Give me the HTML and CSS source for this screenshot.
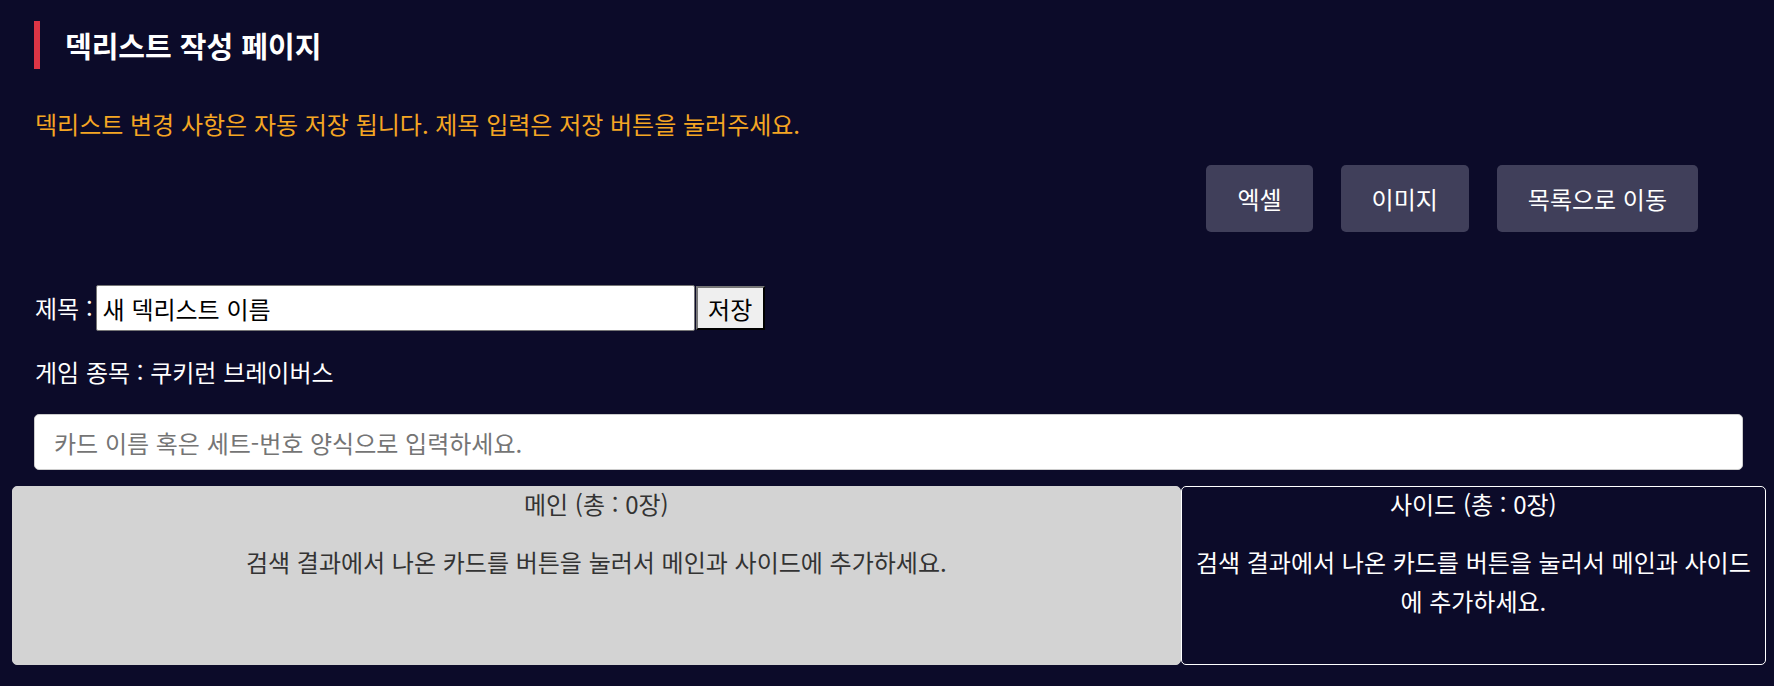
FILE: index.html
```html
<!DOCTYPE html>
<html lang="ko">
<head>
    <meta charset="UTF-8">
    <title>덱리스트 작성 페이지</title>
    <meta name="viewport" content="width=device-width, initial-scale=1.0">
    <link rel="stylesheet" href="styles.css">
</head>
<body>
    <div class="deck-editor">
        <h2 class="page-title">덱리스트 작성 페이지</h2>
        <p class="notice">덱리스트 변경 사항은 자동 저장 됩니다. 제목 입력은 저장 버튼을 눌러주세요.</p>

        <div class="toolbar">
            <button class="tool-btn">엑셀</button>
            <button class="tool-btn">이미지</button>
            <button class="tool-btn">목록으로 이동</button>
        </div>

        <div class="title-row">
            <label class="title-label" for="deckTitle">제목 :</label>
            <input class="title-input" id="deckTitle" type="text" value="새 덱리스트 이름">
            <button class="save-btn">저장</button>
        </div>

        <p class="game-type">게임 종목 : 쿠키런 브레이버스</p>

        <input class="card-search" type="text" placeholder="카드 이름 혹은 세트-번호 양식으로 입력하세요.">
    </div>

    <!-- Main / Side deck -->
    <div class="deck-panels">
        <div class="deck-panel deck-main">
            <div class="panel-title">메인 (총 : 0장)</div>
            <p class="panel-hint">검색 결과에서 나온 카드를 버튼을 눌러서 메인과 사이드에 추가하세요.</p>
        </div>
        <div class="deck-panel deck-side">
            <div class="panel-title">사이드 (총 : 0장)</div>
            <p class="panel-hint">검색 결과에서 나온 카드를 버튼을 눌러서 메인과 사이드에 추가하세요.</p>
        </div>
    </div>
</body>
</html>
```

FILE: styles.css
```css
body {
    margin: 0;
    font-family: "Noto Sans CJK KR", "Noto Sans", sans-serif;
    font-size: 24px;
    line-height: 34px;
    background: #0c0b29;
    color: #fff;
}
.deck-editor {
    padding: 21px 31px 0 34px;
}
.page-title {
    margin: 0;
    height: 48px;
    display: flex;
    align-items: center;
    border-left: 6px solid #dc3545;
    padding-left: 25px;
    font-size: 29px;
    font-weight: bold;
}
.notice {
    margin: 38px 0 0 1px;
    color: #f5a623;
}
.toolbar {
    display: flex;
    justify-content: flex-end;
    gap: 28px;
    margin-top: 24px;
    padding-right: 45px;
}
.tool-btn {
    height: 67px;
    padding: 0 31px;
    background: #403f5a;
    color: #fff;
    border: none;
    border-radius: 5px;
    font-family: inherit;
    font-size: 24px;
    cursor: pointer;
}
.title-row {
    display: flex;
    align-items: center;
    margin-top: 53px;
    height: 46px;
}
.title-label {
    margin: 0 3px 0 1px;
}
.title-input {
    width: 599px;
    height: 46px;
    box-sizing: border-box;
    padding: 0 6px;
    border: 1px solid #767676;
    border-radius: 2px;
    font-family: inherit;
    font-size: 24px;
    color: #000;
}
.save-btn {
    height: 44px;
    padding: 0 10.5px;
    margin-left: 1px;
    background: #efefef;
    color: #000;
    border: 2px solid;
    border-color: #767676 #000 #000 #767676;
    font-family: inherit;
    font-size: 24px;
}
.game-type {
    margin: 24px 0 0 1px;
}
.card-search {
    display: block;
    width: 100%;
    height: 56px;
    box-sizing: border-box;
    margin-top: 25px;
    padding: 0 19px;
    border: 1px solid #ccc;
    border-radius: 5px;
    font-family: inherit;
    font-size: 24px;
}
.card-search::placeholder {
    color: #757575;
}
.deck-panels {
    display: flex;
    margin: 16px 8px 0 12px;
}
.deck-panel {
    box-sizing: border-box;
    min-height: 179px;
    border: 1px solid #fff;
    border-radius: 5px;
    text-align: center;
}
.deck-main {
    flex: 2;
    background: #d3d3d3;
    border-color: #d3d3d3;
    color: #333;
}
.deck-side {
    flex: 1;
    color: #fff;
}
.panel-title {
    line-height: 34px;
}
.panel-hint {
    margin: 21px 10px;
    line-height: 39px;
}
```
